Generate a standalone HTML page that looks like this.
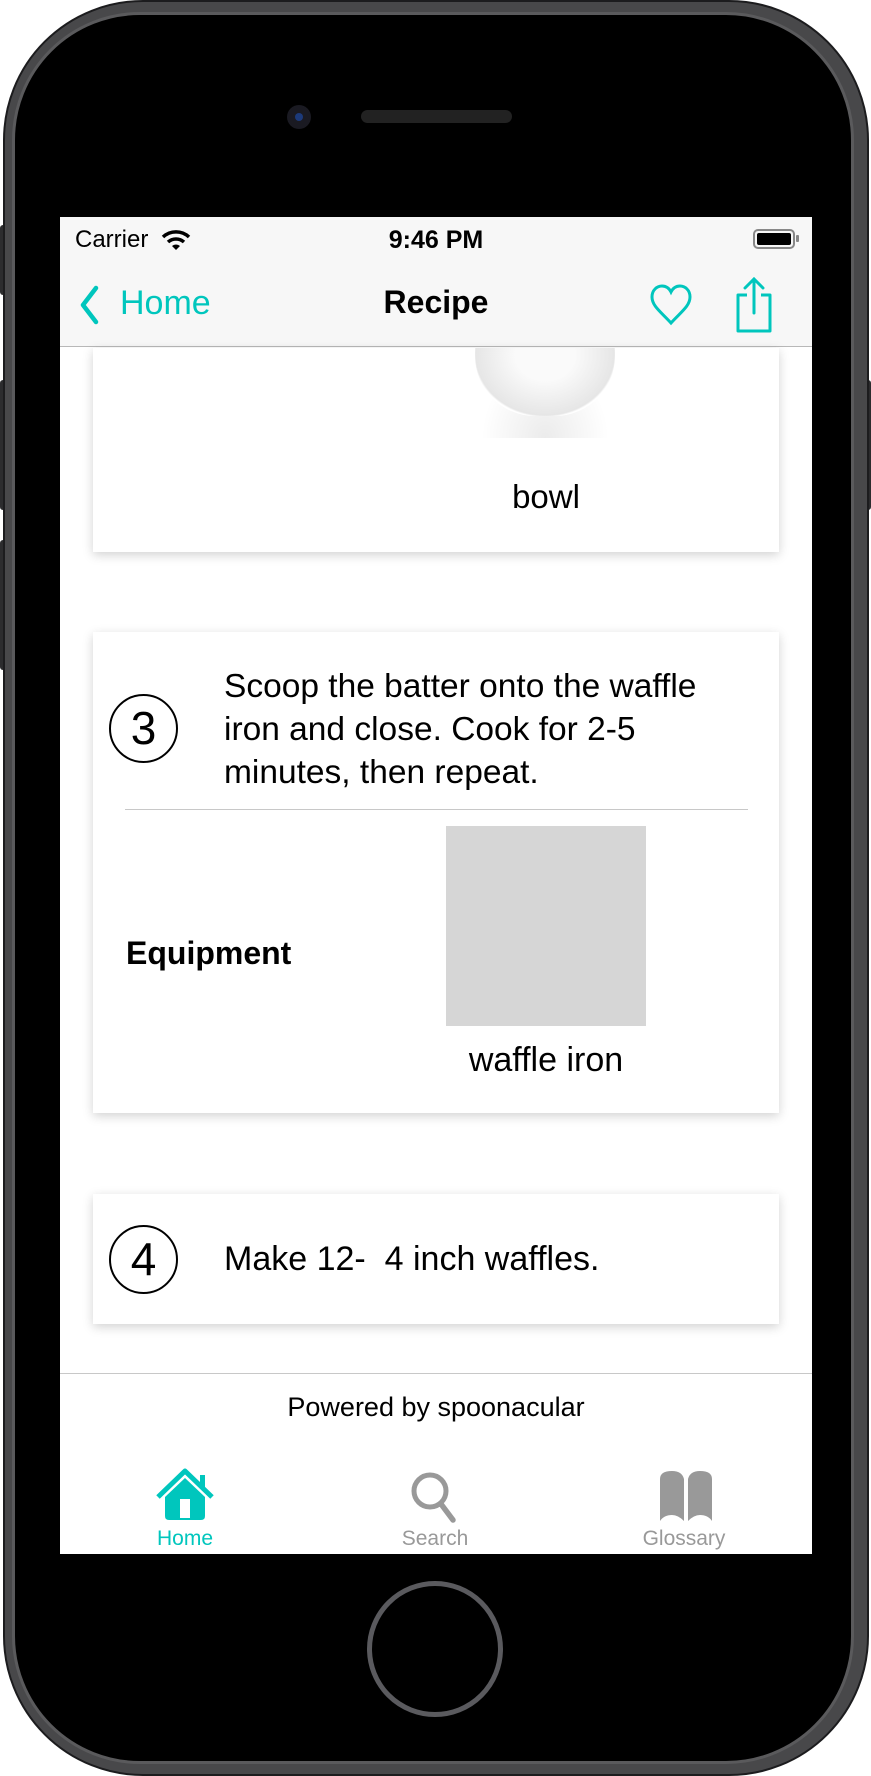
<!DOCTYPE html>
<html><head><meta charset="utf-8"><style>
*{margin:0;padding:0;box-sizing:border-box}
body{width:871px;height:1776px;background:#fff;position:relative;overflow:hidden;font-family:"Liberation Sans",sans-serif}
.abs{position:absolute}
.phone{left:3px;top:0;width:866px;height:1776px;border-radius:140px;background:#48484a;border:2px solid #1c1c1e}
.inner{left:12px;top:12px;width:842px;height:1752px;border-radius:128px;background:#000;border:3px solid #5a5a5c}
.screen{left:60px;top:217px;width:752px;height:1337px;background:#fff;overflow:hidden}
.card{background:#fff;box-shadow:0 3px 10px rgba(0,0,0,.18)}
.t{white-space:nowrap}
</style></head><body>
<div class="abs" style="left:0;top:225px;width:8px;height:70px;background:#2c2c2e;border-radius:3px"></div>
<div class="abs" style="left:0;top:380px;width:8px;height:130px;background:#2c2c2e;border-radius:3px"></div>
<div class="abs" style="left:0;top:540px;width:8px;height:130px;background:#2c2c2e;border-radius:3px"></div>
<div class="abs" style="right:0;top:380px;width:6px;height:130px;background:#2c2c2e;border-radius:3px"></div>
<div class="abs phone"></div>
<div class="abs inner"></div>
<div class="abs" style="left:287px;top:105px;width:24px;height:24px;border-radius:50%;background:#1a1a22"></div>
<div class="abs" style="left:295px;top:113px;width:8px;height:8px;border-radius:50%;background:#1c3a7a"></div>
<div class="abs" style="left:361px;top:110px;width:151px;height:13px;border-radius:7px;background:#222"></div>
<div class="abs" style="left:367px;top:1581px;width:136px;height:136px;border-radius:50%;border:5px solid #5a5a5e"></div>

<div class="abs screen">
  <div class="abs" style="left:0;top:0;width:752px;height:130px;background:#f7f7f7;border-bottom:1px solid #b8b8b8"></div>
  <div class="abs t" style="left:15px;top:9px;font-size:24px">Carrier</div>
  <svg class="abs" style="left:101px;top:12px" width="30" height="22" viewBox="0 0 30 22"><path d="M2 8 A19 19 0 0 1 28 8" stroke="#000" stroke-width="3.5" fill="none"/><path d="M7 13 A12 12 0 0 1 23 13" stroke="#000" stroke-width="3.5" fill="none"/><path d="M11 17 L15 21 L19 17 A6 6 0 0 0 11 17Z" fill="#000"/></svg>
  <div class="abs t" style="left:0;width:752px;top:9px;text-align:center;font-size:25px;font-weight:bold">9:46 PM</div>
  <div class="abs" style="left:693px;top:12px;width:42px;height:20px;border:2px solid #888;border-radius:5px;padding:2px"><div style="width:100%;height:100%;background:#000;border-radius:2px"></div></div>
  <div class="abs" style="left:736px;top:18px;width:3px;height:7px;background:#888;border-radius:1px"></div>
  <svg class="abs" style="left:18px;top:68px" width="22" height="40" viewBox="0 0 22 40"><path d="M18 3 L5 20 L18 37" stroke="#00c6bd" stroke-width="4.5" fill="none" stroke-linecap="round" stroke-linejoin="round"/></svg>
  <div class="abs t" style="left:60px;top:67px;font-size:34px;color:#00c6bd">Home</div>
  <div class="abs t" style="left:0;width:752px;top:67px;text-align:center;font-size:32px;font-weight:bold">Recipe</div>
  <svg class="abs" style="left:589px;top:67px" width="44" height="42" viewBox="0 0 44 42"><path d="M22 39 C12 28 3 22 3 13 C3 6 8 2 13 2 C17 2 20 4 22 8 C24 4 27 2 31 2 C36 2 41 6 41 13 C41 22 32 28 22 39Z" stroke="#00c6bd" stroke-width="3" fill="none"/></svg>
  <svg class="abs" style="left:672px;top:60px" width="44" height="56" viewBox="0 0 44 56"><path d="M15 18 H6 V54 H38 V18 H29" stroke="#00c6bd" stroke-width="3" fill="none" stroke-linejoin="round"/><path d="M22 3 V36 M13 11 L22 2 L31 11" stroke="#00c6bd" stroke-width="3" fill="none" stroke-linecap="round"/></svg>

  <div class="abs card" style="left:33px;top:131px;width:686px;height:204px"></div>
  <div class="abs" style="left:410px;top:131px;width:150px;height:90px;background:radial-gradient(ellipse at 50% 100%,rgba(0,0,0,.08),rgba(255,255,255,0) 60%)"></div>
  <div class="abs" style="left:415px;top:131px;width:140px;height:68px;background:radial-gradient(ellipse at 50% 10%,#fafafa 30%,#e6e6e6 70%,#fff 72%);border-radius:0 0 60px 60px/0 0 60px 60px"></div>
  <div class="abs t" style="left:386px;width:200px;top:261px;text-align:center;font-size:33px">bowl</div>

  <div class="abs card" style="left:33px;top:415px;width:686px;height:481px"></div>
  <div class="abs" style="left:49px;top:477px;width:69px;height:69px;border:2px solid #000;border-radius:50%;font-size:46px;text-align:center;line-height:64px">3</div>
  <div class="abs" style="left:164px;top:448px;font-size:33.5px;line-height:43px;width:560px">Scoop the batter onto the waffle<br>iron and close. Cook for 2-5<br>minutes, then repeat.</div>
  <div class="abs" style="left:65px;top:592px;width:623px;height:1px;background:#c8c8c8"></div>
  <div class="abs t" style="left:66px;top:718px;font-size:32px;font-weight:bold">Equipment</div>
  <div class="abs" style="left:386px;top:609px;width:200px;height:200px;background:#d6d6d6"></div>
  <div class="abs t" style="left:336px;width:300px;top:824px;text-align:center;font-size:34px">waffle iron</div>

  <div class="abs card" style="left:33px;top:977px;width:686px;height:130px"></div>
  <div class="abs" style="left:49px;top:1008px;width:69px;height:69px;border:2px solid #000;border-radius:50%;font-size:46px;text-align:center;line-height:64px">4</div>
  <div class="abs t" style="left:164px;top:1023px;font-size:34px;white-space:pre">Make 12-  4 inch waffles.</div>

  <div class="abs" style="left:0;top:1156px;width:752px;height:1px;background:#c8c8c8"></div>
  <div class="abs t" style="left:0;width:752px;top:1175px;text-align:center;font-size:27px">Powered by spoonacular</div>

  <svg class="abs" style="left:96px;top:1250px" width="58" height="54" viewBox="0 0 58 54"><path d="M2 30 L29 4 L56 30" stroke="#00c6bd" stroke-width="5" fill="none" stroke-linejoin="round"/><rect x="44" y="8" width="5" height="14" fill="#00c6bd"/><path d="M9 30 L29 11 L49 30 V49 Q49 53 45 53 H13 Q9 53 9 49Z" fill="#00c6bd"/><rect x="24" y="32" width="10" height="19" fill="#fff"/></svg>
  <div class="abs t" style="left:65px;width:120px;top:1310px;text-align:center;font-size:21px;color:#00c6bd">Home</div>
  <svg class="abs" style="left:350px;top:1253px" width="50" height="54" viewBox="0 0 50 54"><circle cx="20" cy="21" r="16" stroke="#999" stroke-width="5" fill="none"/><path d="M31 34 L43 50" stroke="#999" stroke-width="5.5" stroke-linecap="round"/></svg>
  <div class="abs t" style="left:315px;width:120px;top:1310px;text-align:center;font-size:21px;color:#999">Search</div>
  <svg class="abs" style="left:598px;top:1252px" width="56" height="54" viewBox="0 0 56 54"><path d="M2 10 Q2 2 14 2 Q24 2 26 10 V52 Q20 46 14 46 Q6 46 2 52Z" fill="#999"/><path d="M54 10 Q54 2 42 2 Q32 2 30 10 V52 Q36 46 42 46 Q50 46 54 52Z" fill="#999"/></svg>
  <div class="abs t" style="left:564px;width:120px;top:1310px;text-align:center;font-size:21px;color:#999">Glossary</div>
</div>
</body></html>
